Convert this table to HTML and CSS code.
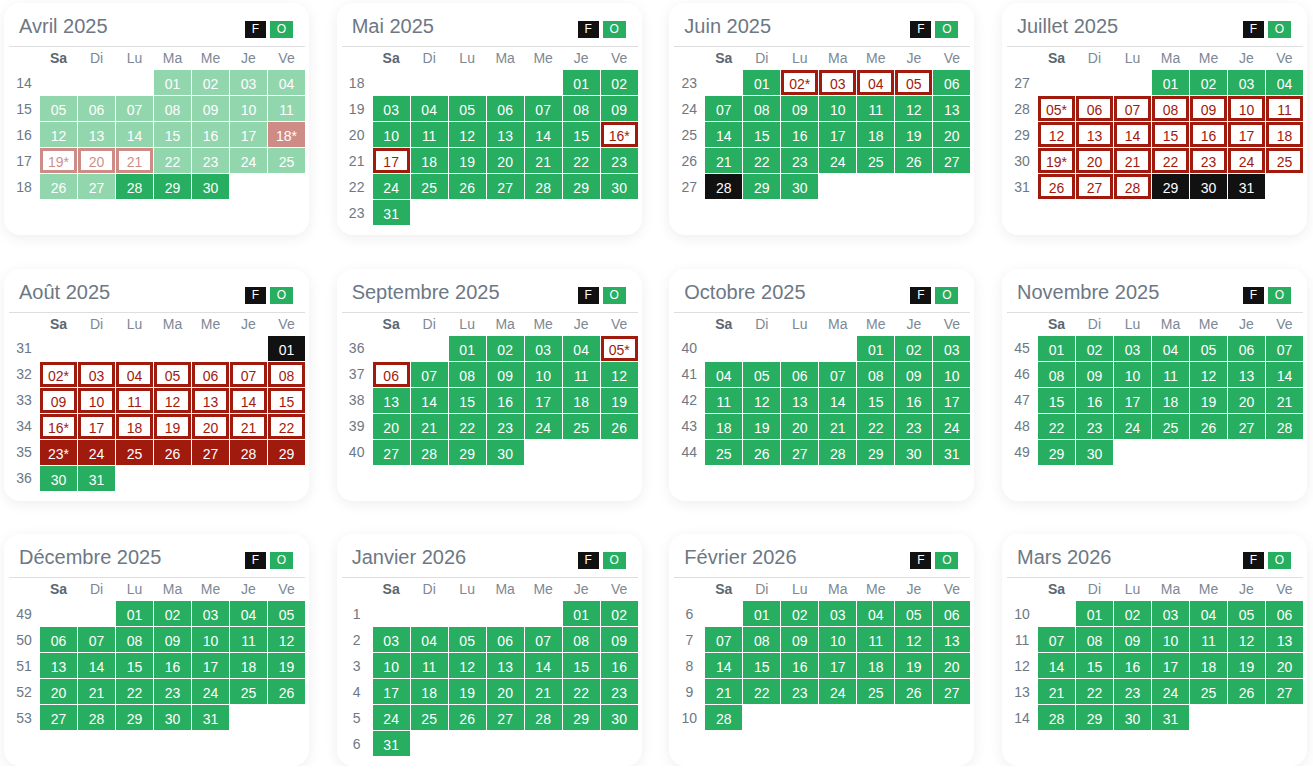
FILE: index.html
```html
<!DOCTYPE html>
<html lang="fr">
<head>
<meta charset="utf-8">
<title>Calendrier</title>
<link rel="stylesheet" href="styles.css">
</head>
<body>
<div class="wrap">

<div class="card">
  <div class="head"><h2 class="title">Avril 2025</h2><div class="badges"><span class="b bf">F</span><span class="b bo">O</span></div></div>
  <div class="cal">
    <span class="dn sa">Sa</span><span class="dn">Di</span><span class="dn">Lu</span><span class="dn">Ma</span><span class="dn">Me</span><span class="dn">Je</span><span class="dn">Ve</span>
    <span class="wk">14</span><span class="d f s5">01</span><span class="d f">02</span><span class="d f">03</span><span class="d f">04</span>
    <span class="wk">15</span><span class="d f">05</span><span class="d f">06</span><span class="d f">07</span><span class="d f">08</span><span class="d f">09</span><span class="d f">10</span><span class="d f">11</span>
    <span class="wk">16</span><span class="d f">12</span><span class="d f">13</span><span class="d f">14</span><span class="d f">15</span><span class="d f">16</span><span class="d f">17</span><span class="d rf f">18*</span>
    <span class="wk">17</span><span class="d r f">19*</span><span class="d r f">20</span><span class="d r f">21</span><span class="d f">22</span><span class="d f">23</span><span class="d f">24</span><span class="d f">25</span>
    <span class="wk">18</span><span class="d f">26</span><span class="d f">27</span><span class="d">28</span><span class="d">29</span><span class="d">30</span>
  </div>
</div>

<div class="card">
  <div class="head"><h2 class="title">Mai 2025</h2><div class="badges"><span class="b bf">F</span><span class="b bo">O</span></div></div>
  <div class="cal">
    <span class="dn sa">Sa</span><span class="dn">Di</span><span class="dn">Lu</span><span class="dn">Ma</span><span class="dn">Me</span><span class="dn">Je</span><span class="dn">Ve</span>
    <span class="wk">18</span><span class="d s7">01</span><span class="d">02</span>
    <span class="wk">19</span><span class="d">03</span><span class="d">04</span><span class="d">05</span><span class="d">06</span><span class="d">07</span><span class="d">08</span><span class="d">09</span>
    <span class="wk">20</span><span class="d">10</span><span class="d">11</span><span class="d">12</span><span class="d">13</span><span class="d">14</span><span class="d">15</span><span class="d r">16*</span>
    <span class="wk">21</span><span class="d r">17</span><span class="d">18</span><span class="d">19</span><span class="d">20</span><span class="d">21</span><span class="d">22</span><span class="d">23</span>
    <span class="wk">22</span><span class="d">24</span><span class="d">25</span><span class="d">26</span><span class="d">27</span><span class="d">28</span><span class="d">29</span><span class="d">30</span>
    <span class="wk">23</span><span class="d">31</span>
  </div>
</div>

<div class="card">
  <div class="head"><h2 class="title">Juin 2025</h2><div class="badges"><span class="b bf">F</span><span class="b bo">O</span></div></div>
  <div class="cal">
    <span class="dn sa">Sa</span><span class="dn">Di</span><span class="dn">Lu</span><span class="dn">Ma</span><span class="dn">Me</span><span class="dn">Je</span><span class="dn">Ve</span>
    <span class="wk">23</span><span class="d s3">01</span><span class="d r">02*</span><span class="d r">03</span><span class="d r">04</span><span class="d r">05</span><span class="d">06</span>
    <span class="wk">24</span><span class="d">07</span><span class="d">08</span><span class="d">09</span><span class="d">10</span><span class="d">11</span><span class="d">12</span><span class="d">13</span>
    <span class="wk">25</span><span class="d">14</span><span class="d">15</span><span class="d">16</span><span class="d">17</span><span class="d">18</span><span class="d">19</span><span class="d">20</span>
    <span class="wk">26</span><span class="d">21</span><span class="d">22</span><span class="d">23</span><span class="d">24</span><span class="d">25</span><span class="d">26</span><span class="d">27</span>
    <span class="wk">27</span><span class="d k">28</span><span class="d">29</span><span class="d">30</span>
  </div>
</div>

<div class="card">
  <div class="head"><h2 class="title">Juillet 2025</h2><div class="badges"><span class="b bf">F</span><span class="b bo">O</span></div></div>
  <div class="cal">
    <span class="dn sa">Sa</span><span class="dn">Di</span><span class="dn">Lu</span><span class="dn">Ma</span><span class="dn">Me</span><span class="dn">Je</span><span class="dn">Ve</span>
    <span class="wk">27</span><span class="d s5">01</span><span class="d">02</span><span class="d">03</span><span class="d">04</span>
    <span class="wk">28</span><span class="d r">05*</span><span class="d r">06</span><span class="d r">07</span><span class="d r">08</span><span class="d r">09</span><span class="d r">10</span><span class="d r">11</span>
    <span class="wk">29</span><span class="d r">12</span><span class="d r">13</span><span class="d r">14</span><span class="d r">15</span><span class="d r">16</span><span class="d r">17</span><span class="d r">18</span>
    <span class="wk">30</span><span class="d r">19*</span><span class="d r">20</span><span class="d r">21</span><span class="d r">22</span><span class="d r">23</span><span class="d r">24</span><span class="d r">25</span>
    <span class="wk">31</span><span class="d r">26</span><span class="d r">27</span><span class="d r">28</span><span class="d k">29</span><span class="d k">30</span><span class="d k">31</span>
  </div>
</div>

<div class="card">
  <div class="head"><h2 class="title">Août 2025</h2><div class="badges"><span class="b bf">F</span><span class="b bo">O</span></div></div>
  <div class="cal">
    <span class="dn sa">Sa</span><span class="dn">Di</span><span class="dn">Lu</span><span class="dn">Ma</span><span class="dn">Me</span><span class="dn">Je</span><span class="dn">Ve</span>
    <span class="wk">31</span><span class="d k s8">01</span>
    <span class="wk">32</span><span class="d r">02*</span><span class="d r">03</span><span class="d r">04</span><span class="d r">05</span><span class="d r">06</span><span class="d r">07</span><span class="d r">08</span>
    <span class="wk">33</span><span class="d r">09</span><span class="d r">10</span><span class="d r">11</span><span class="d r">12</span><span class="d r">13</span><span class="d r">14</span><span class="d r">15</span>
    <span class="wk">34</span><span class="d r">16*</span><span class="d r">17</span><span class="d r">18</span><span class="d r">19</span><span class="d r">20</span><span class="d r">21</span><span class="d r">22</span>
    <span class="wk">35</span><span class="d rf">23*</span><span class="d rf">24</span><span class="d rf">25</span><span class="d rf">26</span><span class="d rf">27</span><span class="d rf">28</span><span class="d rf">29</span>
    <span class="wk">36</span><span class="d">30</span><span class="d">31</span>
  </div>
</div>

<div class="card">
  <div class="head"><h2 class="title">Septembre 2025</h2><div class="badges"><span class="b bf">F</span><span class="b bo">O</span></div></div>
  <div class="cal">
    <span class="dn sa">Sa</span><span class="dn">Di</span><span class="dn">Lu</span><span class="dn">Ma</span><span class="dn">Me</span><span class="dn">Je</span><span class="dn">Ve</span>
    <span class="wk">36</span><span class="d s4">01</span><span class="d">02</span><span class="d">03</span><span class="d">04</span><span class="d r">05*</span>
    <span class="wk">37</span><span class="d r">06</span><span class="d">07</span><span class="d">08</span><span class="d">09</span><span class="d">10</span><span class="d">11</span><span class="d">12</span>
    <span class="wk">38</span><span class="d">13</span><span class="d">14</span><span class="d">15</span><span class="d">16</span><span class="d">17</span><span class="d">18</span><span class="d">19</span>
    <span class="wk">39</span><span class="d">20</span><span class="d">21</span><span class="d">22</span><span class="d">23</span><span class="d">24</span><span class="d">25</span><span class="d">26</span>
    <span class="wk">40</span><span class="d">27</span><span class="d">28</span><span class="d">29</span><span class="d">30</span>
  </div>
</div>

<div class="card">
  <div class="head"><h2 class="title">Octobre 2025</h2><div class="badges"><span class="b bf">F</span><span class="b bo">O</span></div></div>
  <div class="cal">
    <span class="dn sa">Sa</span><span class="dn">Di</span><span class="dn">Lu</span><span class="dn">Ma</span><span class="dn">Me</span><span class="dn">Je</span><span class="dn">Ve</span>
    <span class="wk">40</span><span class="d s6">01</span><span class="d">02</span><span class="d">03</span>
    <span class="wk">41</span><span class="d">04</span><span class="d">05</span><span class="d">06</span><span class="d">07</span><span class="d">08</span><span class="d">09</span><span class="d">10</span>
    <span class="wk">42</span><span class="d">11</span><span class="d">12</span><span class="d">13</span><span class="d">14</span><span class="d">15</span><span class="d">16</span><span class="d">17</span>
    <span class="wk">43</span><span class="d">18</span><span class="d">19</span><span class="d">20</span><span class="d">21</span><span class="d">22</span><span class="d">23</span><span class="d">24</span>
    <span class="wk">44</span><span class="d">25</span><span class="d">26</span><span class="d">27</span><span class="d">28</span><span class="d">29</span><span class="d">30</span><span class="d">31</span>
  </div>
</div>

<div class="card">
  <div class="head"><h2 class="title">Novembre 2025</h2><div class="badges"><span class="b bf">F</span><span class="b bo">O</span></div></div>
  <div class="cal">
    <span class="dn sa">Sa</span><span class="dn">Di</span><span class="dn">Lu</span><span class="dn">Ma</span><span class="dn">Me</span><span class="dn">Je</span><span class="dn">Ve</span>
    <span class="wk">45</span><span class="d">01</span><span class="d">02</span><span class="d">03</span><span class="d">04</span><span class="d">05</span><span class="d">06</span><span class="d">07</span>
    <span class="wk">46</span><span class="d">08</span><span class="d">09</span><span class="d">10</span><span class="d">11</span><span class="d">12</span><span class="d">13</span><span class="d">14</span>
    <span class="wk">47</span><span class="d">15</span><span class="d">16</span><span class="d">17</span><span class="d">18</span><span class="d">19</span><span class="d">20</span><span class="d">21</span>
    <span class="wk">48</span><span class="d">22</span><span class="d">23</span><span class="d">24</span><span class="d">25</span><span class="d">26</span><span class="d">27</span><span class="d">28</span>
    <span class="wk">49</span><span class="d">29</span><span class="d">30</span>
  </div>
</div>

<div class="card">
  <div class="head"><h2 class="title">Décembre 2025</h2><div class="badges"><span class="b bf">F</span><span class="b bo">O</span></div></div>
  <div class="cal">
    <span class="dn sa">Sa</span><span class="dn">Di</span><span class="dn">Lu</span><span class="dn">Ma</span><span class="dn">Me</span><span class="dn">Je</span><span class="dn">Ve</span>
    <span class="wk">49</span><span class="d s4">01</span><span class="d">02</span><span class="d">03</span><span class="d">04</span><span class="d">05</span>
    <span class="wk">50</span><span class="d">06</span><span class="d">07</span><span class="d">08</span><span class="d">09</span><span class="d">10</span><span class="d">11</span><span class="d">12</span>
    <span class="wk">51</span><span class="d">13</span><span class="d">14</span><span class="d">15</span><span class="d">16</span><span class="d">17</span><span class="d">18</span><span class="d">19</span>
    <span class="wk">52</span><span class="d">20</span><span class="d">21</span><span class="d">22</span><span class="d">23</span><span class="d">24</span><span class="d">25</span><span class="d">26</span>
    <span class="wk">53</span><span class="d">27</span><span class="d">28</span><span class="d">29</span><span class="d">30</span><span class="d">31</span>
  </div>
</div>

<div class="card">
  <div class="head"><h2 class="title">Janvier 2026</h2><div class="badges"><span class="b bf">F</span><span class="b bo">O</span></div></div>
  <div class="cal">
    <span class="dn sa">Sa</span><span class="dn">Di</span><span class="dn">Lu</span><span class="dn">Ma</span><span class="dn">Me</span><span class="dn">Je</span><span class="dn">Ve</span>
    <span class="wk">1</span><span class="d s7">01</span><span class="d">02</span>
    <span class="wk">2</span><span class="d">03</span><span class="d">04</span><span class="d">05</span><span class="d">06</span><span class="d">07</span><span class="d">08</span><span class="d">09</span>
    <span class="wk">3</span><span class="d">10</span><span class="d">11</span><span class="d">12</span><span class="d">13</span><span class="d">14</span><span class="d">15</span><span class="d">16</span>
    <span class="wk">4</span><span class="d">17</span><span class="d">18</span><span class="d">19</span><span class="d">20</span><span class="d">21</span><span class="d">22</span><span class="d">23</span>
    <span class="wk">5</span><span class="d">24</span><span class="d">25</span><span class="d">26</span><span class="d">27</span><span class="d">28</span><span class="d">29</span><span class="d">30</span>
    <span class="wk">6</span><span class="d">31</span>
  </div>
</div>

<div class="card">
  <div class="head"><h2 class="title">Février 2026</h2><div class="badges"><span class="b bf">F</span><span class="b bo">O</span></div></div>
  <div class="cal">
    <span class="dn sa">Sa</span><span class="dn">Di</span><span class="dn">Lu</span><span class="dn">Ma</span><span class="dn">Me</span><span class="dn">Je</span><span class="dn">Ve</span>
    <span class="wk">6</span><span class="d s3">01</span><span class="d">02</span><span class="d">03</span><span class="d">04</span><span class="d">05</span><span class="d">06</span>
    <span class="wk">7</span><span class="d">07</span><span class="d">08</span><span class="d">09</span><span class="d">10</span><span class="d">11</span><span class="d">12</span><span class="d">13</span>
    <span class="wk">8</span><span class="d">14</span><span class="d">15</span><span class="d">16</span><span class="d">17</span><span class="d">18</span><span class="d">19</span><span class="d">20</span>
    <span class="wk">9</span><span class="d">21</span><span class="d">22</span><span class="d">23</span><span class="d">24</span><span class="d">25</span><span class="d">26</span><span class="d">27</span>
    <span class="wk">10</span><span class="d">28</span>
  </div>
</div>

<div class="card">
  <div class="head"><h2 class="title">Mars 2026</h2><div class="badges"><span class="b bf">F</span><span class="b bo">O</span></div></div>
  <div class="cal">
    <span class="dn sa">Sa</span><span class="dn">Di</span><span class="dn">Lu</span><span class="dn">Ma</span><span class="dn">Me</span><span class="dn">Je</span><span class="dn">Ve</span>
    <span class="wk">10</span><span class="d s3">01</span><span class="d">02</span><span class="d">03</span><span class="d">04</span><span class="d">05</span><span class="d">06</span>
    <span class="wk">11</span><span class="d">07</span><span class="d">08</span><span class="d">09</span><span class="d">10</span><span class="d">11</span><span class="d">12</span><span class="d">13</span>
    <span class="wk">12</span><span class="d">14</span><span class="d">15</span><span class="d">16</span><span class="d">17</span><span class="d">18</span><span class="d">19</span><span class="d">20</span>
    <span class="wk">13</span><span class="d">21</span><span class="d">22</span><span class="d">23</span><span class="d">24</span><span class="d">25</span><span class="d">26</span><span class="d">27</span>
    <span class="wk">14</span><span class="d">28</span><span class="d">29</span><span class="d">30</span><span class="d">31</span>
  </div>
</div>

</div>
</body>
</html>
```

FILE: styles.css
```css
* { box-sizing: border-box; }

body {
  margin: 0;
  background: #ffffff;
  font-family: "Liberation Sans", Arial, sans-serif;
}

.wrap {
  display: grid;
  grid-template-columns: repeat(4, 305px);
  column-gap: 27.67px;
  row-gap: 33.5px;
  padding: 3px 0 0 4px;
}

.card {
  background: #fff;
  border-radius: 16px;
  box-shadow: 0 3px 14px rgba(0, 0, 0, 0.07);
  padding: 11px 4px 10px 5px;
}

.head {
  display: flex;
  justify-content: space-between;
  align-items: flex-end;
  padding: 0 12px 8px 10px;
  border-bottom: 1px solid #dedede;
}

.title {
  margin: 0;
  font-size: 20px;
  line-height: 24px;
  font-weight: normal;
  color: #6d7884;
}

.badges {
  display: flex;
  gap: 4px;
}

.b {
  display: block;
  height: 17px;
  line-height: 17px;
  padding: 0 7px;
  font-size: 12px;
  color: #fff;
  text-align: center;
}
.bf { background: #111111; width: 21px; padding: 0; }
.bo { background: #27ae60; width: 23px; padding: 0; }

.cal {
  display: grid;
  grid-template-columns: 30px repeat(7, 37px);
  grid-template-rows: 22px;
  grid-auto-rows: 25px;
  gap: 1px;
}

.dn {
  display: flex;
  align-items: center;
  justify-content: center;
  font-size: 14px;
  color: #7d8894;
}
.dn.sa { grid-column: 2; font-weight: bold; color: #5c6670; }

.wk {
  grid-column: 1;
  display: flex;
  align-items: center;
  justify-content: center;
  font-size: 14px;
  color: #6d7884;
}

.d {
  background: #27ae60;
  color: #fff;
  font-size: 14px;
  line-height: 16px;
  padding-top: 6px;
  text-align: center;
}
.d.r {
  background: #fff;
  border: 3px solid #a11a0e;
  color: #a11a0e;
  padding-top: 3px;
}
.d.rf { background: #a11a0e; }
.d.k { background: #111111; }
.d.f { opacity: 0.5; }

.s3 { grid-column: 3; }
.s4 { grid-column: 4; }
.s5 { grid-column: 5; }
.s6 { grid-column: 6; }
.s7 { grid-column: 7; }
.s8 { grid-column: 8; }
```
